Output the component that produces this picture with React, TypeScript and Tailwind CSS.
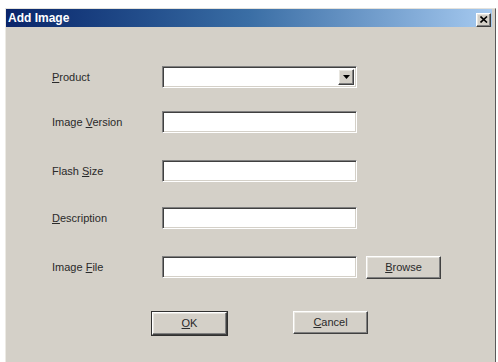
import React from "react";

const sunken =
  "border border-t-[#808080] border-l-[#808080] border-b-white border-r-white shadow-[inset_1px_1px_0_#404040,inset_-1px_-1px_0_#d4d0c8]";
const raised =
  "border border-t-white border-l-white border-b-[#404040] border-r-[#404040] shadow-[inset_-1px_-1px_0_#808080,inset_1px_1px_0_#e8e6e0]";

function Label({ pre, k, post }: { pre: string; k: string; post: string }) {
  return (
    <div className="w-[110px] shrink-0 text-[11px] text-[#2a2a2a]">
      {pre}
      <span className="underline">{k}</span>
      {post}
    </div>
  );
}

function Input() {
  return <div className={`w-[195px] h-[22px] bg-white ${sunken}`} />;
}

function Button({ k, rest, cls }: { k: string; rest: string; cls?: string }) {
  return (
    <div
      className={`w-[75px] h-[23px] bg-[#d4d0c8] flex items-center justify-center text-[11px] text-[#2a2a2a] ${raised} ${cls ?? ""}`}
    >
      <span>
        <span className="underline">{k}</span>
        {rest}
      </span>
    </div>
  );
}

export default function App() {
  return (
    <div className="w-[498px] h-[362px] bg-white pt-[8px] pl-[5px] overflow-hidden font-['Liberation_Sans',Arial,sans-serif]">
      <div className="w-[491px] h-[360px] bg-[#d4d0c8] border-t border-l border-t-[#e4e2dc] border-l-[#eceae4] border-r border-r-[#5a5a5a] flex flex-col">
        <div className="h-[18px] mr-[3px] bg-gradient-to-r from-[#0a246a] via-[#3a6ea5] to-[#a6caf0] flex items-center justify-between pl-[2px] pr-[1px]">
          <span className="text-white font-bold text-[12px] leading-none">Add Image</span>
          <div className={`w-[15px] h-[14px] mt-[3px] bg-[#d4d0c8] flex items-center justify-center ${raised}`}>
            <svg width="8" height="7" viewBox="0 0 8 7">
              <path d="M0.5 0.5 L7 6.5 M7 0.5 L0.5 6.5" stroke="#000" strokeWidth="1.6" />
            </svg>
          </div>
        </div>

        <div className="pl-[46px] pt-[39px] flex flex-col">
          <div className="flex items-center h-[22px]">
            <Label pre="" k="P" post="roduct" />
            <div className={`w-[195px] h-[22px] bg-white flex justify-end items-stretch p-[2px] ${sunken}`}>
              <div className={`w-[16px] bg-[#d4d0c8] flex items-center justify-center ${raised}`}>
                <svg width="7" height="4" viewBox="0 0 7 4">
                  <path d="M0 0 H7 L3.5 4 Z" fill="#000" />
                </svg>
              </div>
            </div>
          </div>

          <div className="flex items-center h-[22px] mt-[23px]">
            <Label pre="Image " k="V" post="ersion" />
            <Input />
          </div>

          <div className="flex items-center h-[22px] mt-[27px]">
            <Label pre="Flash " k="S" post="ize" />
            <Input />
          </div>

          <div className="flex items-center h-[22px] mt-[25px]">
            <Label pre="" k="D" post="escription" />
            <Input />
          </div>

          <div className="flex items-center h-[22px] mt-[27px]">
            <Label pre="Image " k="F" post="ile" />
            <Input />
            <Button k="B" rest="rowse" cls="ml-[9px]" />
          </div>

          <div className="flex mt-[33px] ml-[99px]">
            <div className="border border-[#303030]">
              <Button k="O" rest="K" cls="w-[73px] h-[21px]" />
            </div>
            <Button k="C" rest="ancel" cls="ml-[65px]" />
          </div>
        </div>
      </div>
    </div>
  );
}
